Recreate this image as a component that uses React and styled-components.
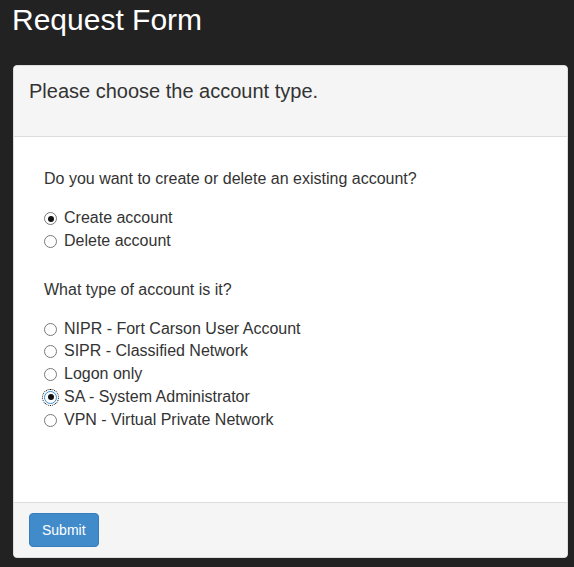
import React from 'react'
import styled, { createGlobalStyle } from 'styled-components'

const GlobalStyle = createGlobalStyle`
  html, body {
    margin: 0;
    padding: 0;
    background: #222222;
    font-family: "Liberation Sans", Arial, Helvetica, sans-serif;
    color: #333333;
  }
`

const Page = styled('div')`
  display: flex;
  flex-direction: column;
  padding: 0 6px 0 13px;
`

const Title = styled('h1')`
  margin: 0;
  padding: 3px 0 29px 0;
  margin-left: -1px;
  font-size: 30px;
  line-height: 33px;
  font-weight: normal;
  color: #ffffff;
`

const Panel = styled('div')`
  display: flex;
  flex-direction: column;
  background: #ffffff;
  border: 1px solid #dddddd;
  border-radius: 4px;
  overflow: hidden;
`

const PanelHeading = styled('div')`
  background: #f5f5f5;
  border-bottom: 1px solid #dddddd;
  padding: 14px 15px 34px 15px;
`

const PanelTitle = styled('h3')`
  margin: 0;
  font-size: 20px;
  line-height: 22px;
  font-weight: normal;
  color: #333333;
`

const PanelBody = styled('div')`
  display: flex;
  flex-direction: column;
  height: 365px;
  box-sizing: border-box;
  padding: 30px 30px 0 30px;
`

const Question = styled('p')`
  margin: 0 0 16px 0;
  font-size: 16px;
  line-height: 23px;
`

const Group = styled('div')`
  display: flex;
  flex-direction: column;
  margin-bottom: ${(p) => (p.$last ? '0' : '26px')};
`

const Option = styled('label')`
  display: flex;
  align-items: flex-start;
  gap: 7px;
  height: 22.75px;
  font-size: 16px;
  line-height: 23px;
`

const Radio = styled('span')`
  position: relative;
  flex: none;
  box-sizing: border-box;
  width: 13px;
  height: 13px;
  margin-top: 6px;
  border-radius: 50%;
  border: 1px solid ${(p) => (p.$focused ? '#3a8fd6' : '#7a7a7a')};
  background: #ffffff;
  outline: ${(p) => (p.$focused ? '1px dotted #000000' : 'none')};
  outline-offset: 1px;

  &::after {
    content: '';
    display: ${(p) => (p.$checked ? 'block' : 'none')};
    position: absolute;
    left: 50%;
    top: 50%;
    width: 6px;
    height: 6px;
    margin: -3px 0 0 -3px;
    border-radius: 50%;
    background: #111111;
  }
`

const PanelFooter = styled('div')`
  display: flex;
  background: #f5f5f5;
  border-top: 1px solid #dddddd;
  padding: 10px 15px;
`

const Button = styled('button')`
  font-family: inherit;
  font-size: 14px;
  line-height: 20px;
  padding: 6px 12px;
  color: #ffffff;
  background: #428bca;
  border: 1px solid #357ebd;
  border-radius: 4px;
  cursor: pointer;
`

const actions = [
  { label: 'Create account', checked: true },
  { label: 'Delete account' },
]

const types = [
  { label: 'NIPR - Fort Carson User Account' },
  { label: 'SIPR - Classified Network' },
  { label: 'Logon only' },
  { label: 'SA - System Administrator', checked: true, focused: true },
  { label: 'VPN - Virtual Private Network' },
]

const RadioList = ({ items, last }) => (
  <Group $last={last}>
    {items.map((item) => (
      <Option key={item.label}>
        <Radio $checked={item.checked} $focused={item.focused} />
        <span>{item.label}</span>
      </Option>
    ))}
  </Group>
)

const App = () => {
  return (
    <Page>
      <GlobalStyle />
      <Title>Request Form</Title>
      <Panel>
        <PanelHeading>
          <PanelTitle>Please choose the account type.</PanelTitle>
        </PanelHeading>
        <PanelBody>
          <Question>Do you want to create or delete an existing account?</Question>
          <RadioList items={actions} />
          <Question>What type of account is it?</Question>
          <RadioList items={types} last />
        </PanelBody>
        <PanelFooter>
          <Button type="button">Submit</Button>
        </PanelFooter>
      </Panel>
    </Page>
  )
}

export default App
